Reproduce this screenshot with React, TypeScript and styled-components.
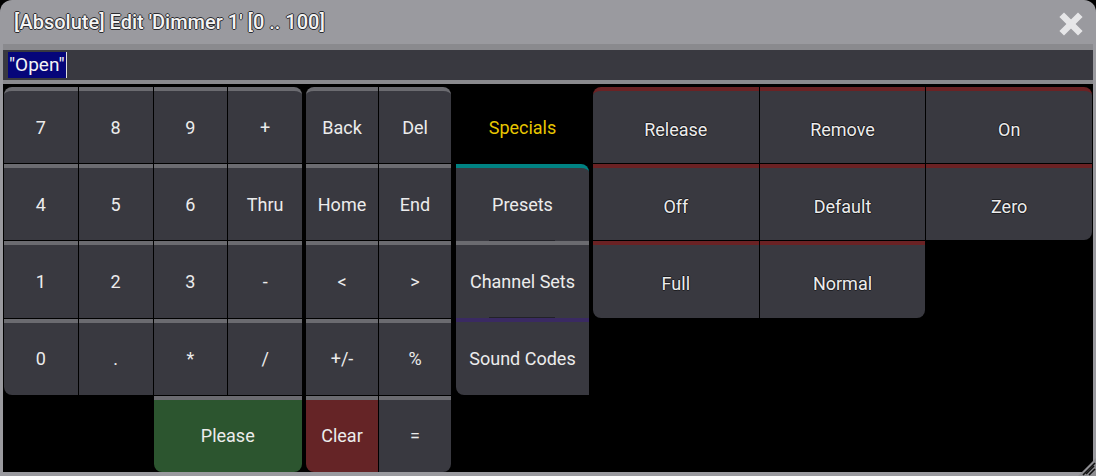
import React from "react";
import styled, { createGlobalStyle } from "styled-components";

const Global = createGlobalStyle`
  html, body { margin: 0; padding: 0; background: #000; }
  body { font-family: Roboto, "Liberation Sans", sans-serif; }
`;

const Window = styled.div`
  position: relative;
  width: 1096px;
  height: 476px;
  box-sizing: border-box;
  background: #9a9a9f;
  border-radius: 12px 12px 0 0;
  padding: 0 3px 4px 3px;
  display: flex;
  flex-direction: column;
  overflow: hidden;
`;

const TitleBar = styled.div`
  height: 44px;
  flex: none;
  display: flex;
  align-items: center;
  justify-content: space-between;
  padding: 0 10px 0 11px;
`;

const Title = styled.div`
  font-family: Roboto, sans-serif;
  font-size: 20px;
  font-weight: 500;
  color: #f4f4f4;
  text-shadow: -1px 0 #2a2a2e, 1px 0 #2a2a2e, 0 -1px #2a2a2e, 0 1px #2a2a2e;
  white-space: pre;
  margin-top: -1px;
`;

const CloseButton = styled.div`
  width: 24px;
  height: 24px;
  display: flex;
  margin-top: 4px;
`;

const InputBand = styled.div`
  flex: none;
  background: #8a8a8e;
  padding: 6px 0 4px 0;
`;

const Field = styled.div`
  height: 30px;
  background: #393940;
  display: flex;
  align-items: center;
  padding-left: 5px;
`;

const Selected = styled.span`
  font-family: Roboto, sans-serif;
  font-size: 19px;
  line-height: 26px;
  color: #f4f4f4;
  background: #06067a;
  padding: 0 1px;
`;

const Caret = styled.span`
  width: 1px;
  height: 26px;
  background: #e0e0e0;
`;

const Content = styled.div`
  flex: 1;
  background: #000;
  display: flex;
  align-items: flex-start;
  padding: 3px 0 0 1px;
`;

const Block = styled.div<{ $cols: number; $width: number; $ml?: number }>`
  display: grid;
  grid-template-columns: repeat(${(p) => p.$cols}, 1fr);
  grid-template-rows: repeat(5, 1fr);
  gap: 1px;
  width: ${(p) => p.$width}px;
  height: 385px;
  margin-left: ${(p) => p.$ml ?? 0}px;
  flex: none;
`;

const TabColumn = styled.div`
  display: grid;
  grid-template-rows: repeat(5, 1fr);
  width: 133px;
  height: 385px;
  margin-left: 5px;
  flex: none;
`;

const Key = styled.div<{
  $bg?: string;
  $stripe?: string;
  $r?: string;
  $span?: number;
  $outline?: boolean;
}>`
  background: ${(p) => p.$bg ?? "#393940"};
  border-top: 4px solid ${(p) => p.$stripe ?? "#6b6b70"};
  border-radius: ${(p) => p.$r ?? "0"};
  grid-column: span ${(p) => p.$span ?? 1};
  display: flex;
  align-items: center;
  justify-content: center;
  padding-top: ${(p) => (p.$outline ? "4px" : "0")};
  font-family: Roboto, sans-serif;
  font-size: 18px;
  color: #ececec;
  text-shadow: ${(p) =>
    p.$outline
      ? "-1px 0 #1e1e22, 1px 0 #1e1e22, 0 -1px #1e1e22, 0 1px #1e1e22"
      : "none"};
  overflow: hidden;
`;

const Empty = styled.div``;

const Tab = styled.div<{ $stripe?: string; $r?: string; $active?: boolean; $notch?: boolean }>`
  position: relative;
  background: ${(p) => (p.$active ? "#000" : "#393940")};
  border-top: 4px solid ${(p) => (p.$active ? "#000" : p.$stripe ?? "#6b6b70")};
  border-radius: ${(p) => p.$r ?? "0"};
  display: flex;
  align-items: center;
  justify-content: center;
  font-family: Roboto, sans-serif;
  font-size: 18px;
  color: ${(p) => (p.$active ? "#e8c600" : "#ececec")};
  &::before {
    content: "";
    display: ${(p) => (p.$notch ? "block" : "none")};
    position: absolute;
    top: -5px;
    left: 33px;
    width: 66px;
    height: 1px;
    background: #222228;
  }
`;

const Grip = styled.div`
  position: absolute;
  right: 0;
  bottom: 0;
  width: 18px;
  height: 18px;
`;

const numRows: { label: string; r?: string }[][] = [
  [{ label: "7", r: "8px 0 0 0" }, { label: "8" }, { label: "9" }, { label: "+", r: "0 8px 0 0" }],
  [{ label: "4" }, { label: "5" }, { label: "6" }, { label: "Thru" }],
  [{ label: "1" }, { label: "2" }, { label: "3" }, { label: "-" }],
  [{ label: "0", r: "0 0 0 8px" }, { label: "." }, { label: "*" }, { label: "/" }],
];

const editRows: { label: string; r?: string }[][] = [
  [{ label: "Back", r: "8px 0 0 0" }, { label: "Del", r: "0 8px 0 0" }],
  [{ label: "Home" }, { label: "End" }],
  [{ label: "<" }, { label: ">" }],
  [{ label: "+/-" }, { label: "%" }],
];

const specials: { label: string; r?: string }[] = [
  { label: "Release", r: "8px 0 0 0" },
  { label: "Remove" },
  { label: "On", r: "0 8px 0 0" },
  { label: "Off" },
  { label: "Default" },
  { label: "Zero", r: "0 0 8px 0" },
  { label: "Full", r: "0 0 0 8px" },
  { label: "Normal", r: "0 0 8px 0" },
];

export default function App() {
  return (
    <>
      <Global />
      <Window>
        <TitleBar>
          <Title>[Absolute] Edit 'Dimmer 1' [0 .. 100]</Title>
          <CloseButton>
            <svg width="24" height="24" viewBox="0 0 24 24">
              <g stroke="#e6e6e8" strokeWidth="6.5" strokeLinecap="square">
                <line x1="5" y1="5" x2="19" y2="19" />
                <line x1="19" y1="5" x2="5" y2="19" />
              </g>
            </svg>
          </CloseButton>
        </TitleBar>
        <InputBand>
          <Field>
            <Selected>"Open"</Selected>
            <Caret />
          </Field>
        </InputBand>
        <Content>
          <Block $cols={4} $width={298}>
            {numRows.flat().map((k, i) => (
              <Key key={i} $r={k.r}>
                {k.label}
              </Key>
            ))}
            <Empty />
            <Empty />
            <Key $span={2} $bg="#2c552f" $r="0 0 8px 8px">
              Please
            </Key>
          </Block>
          <Block $cols={2} $width={145} $ml={4}>
            {editRows.flat().map((k, i) => (
              <Key key={i} $r={k.r}>
                {k.label}
              </Key>
            ))}
            <Key $bg="#652426" $r="0 0 0 8px">
              Clear
            </Key>
            <Key $r="0 0 8px 0">=</Key>
          </Block>
          <TabColumn>
            <Tab $active>Specials</Tab>
            <Tab $stripe="#008282" $r="0 8px 0 0">
              Presets
            </Tab>
            <Tab $notch>Channel Sets</Tab>
            <Tab $notch $stripe="#3a2a62" $r="0 0 0 8px">
              Sound Codes
            </Tab>
          </TabColumn>
          <Block $cols={3} $width={499} $ml={4}>
            {specials.map((k, i) => (
              <Key key={i} $r={k.r} $stripe="#6b2224" $outline>
                {k.label}
              </Key>
            ))}
          </Block>
        </Content>
        <Grip>
          <svg width="18" height="18" viewBox="0 0 18 18">
            <polygon points="18,0 18,18 0,18" fill="#8e8e92" />
            <g stroke="#111" strokeWidth="1.6">
              <line x1="8" y1="16" x2="16" y2="8" />
              <line x1="11" y1="17" x2="17" y2="11" />
              <line x1="5" y1="17" x2="17" y2="5" />
            </g>
          </svg>
        </Grip>
      </Window>
    </>
  );
}
